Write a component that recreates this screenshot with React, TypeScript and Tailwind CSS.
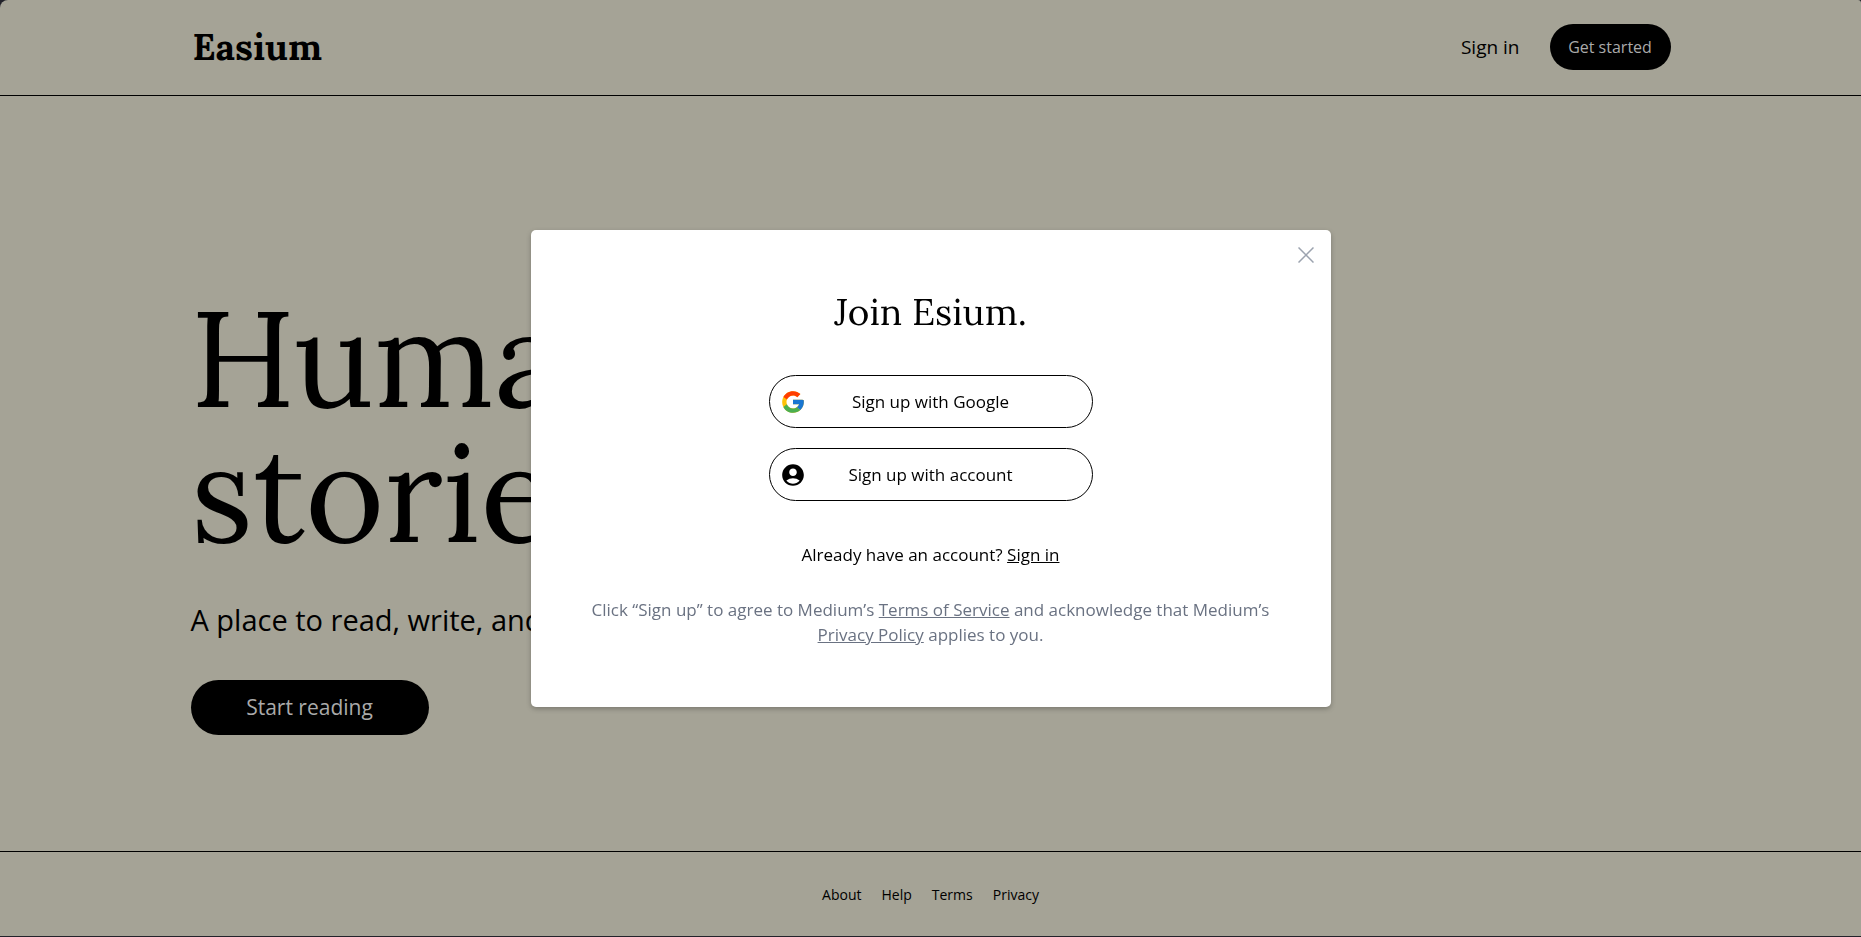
import React from "react";
import { FcGoogle } from "react-icons/fc";
import { MdAccountCircle } from "react-icons/md";

const serif = "font-['Lora','Liberation_Serif',serif]";

const footerLinks = ["About", "Help", "Terms", "Privacy"];

function Header() {
  return (
    <header className="border-b border-black">
      <div className="mx-auto flex h-[95px] max-w-[1480px] items-center justify-between pb-px">
        <a href="#" className={`${serif} pl-0.5 text-[37px] leading-[48px] font-bold`}>
          Easium
        </a>
        <nav className="flex items-center gap-[30px]">
          <a href="#signin" className="text-[19px]">
            Sign in
          </a>
          <button
            type="button"
            className="h-[46px] w-[121px] rounded-full bg-black text-[16px] text-[#aaaaaa]"
          >
            Get started
          </button>
        </nav>
      </div>
    </header>
  );
}

function Hero() {
  return (
    <main className="flex flex-1 items-center pt-[78px]">
      <div className="mx-auto w-full max-w-[1480px]">
        <h1 className={`${serif} text-[135px] leading-[135px]`}>
          Human
          <br />
          stories &amp; ideas
        </h1>
        <p className="mt-9 text-[29px] leading-[48px]">
          A place to read, write, and deepen your understanding
        </p>
        <button
          type="button"
          className="mt-9 h-[55px] w-[238px] rounded-full bg-black text-[21px] text-[#aaaaaa]"
        >
          Start reading
        </button>
      </div>
    </main>
  );
}

function Footer() {
  return (
    <footer className="border-t border-black">
      <nav className="flex h-[84px] items-center justify-center gap-5 text-[14px]">
        {footerLinks.map((label) => (
          <a key={label} href={`#${label.toLowerCase()}`}>
            {label}
          </a>
        ))}
      </nav>
    </footer>
  );
}

function SignUpButton({ icon, children }: { icon: React.ReactNode; children: React.ReactNode }) {
  return (
    <button
      type="button"
      className="grid h-[53px] w-[324px] grid-cols-[26px_1fr_26px] items-center rounded-full border border-black px-[10px] text-[17px]"
    >
      {icon}
      <span>{children}</span>
    </button>
  );
}

function JoinDialog() {
  return (
    <div className="fixed inset-0 flex items-center justify-center">
      <section
        role="dialog"
        aria-labelledby="join-title"
        className="relative flex w-[800px] flex-col items-center rounded-[5px] bg-white px-[60px] pt-[58px] pb-[60px] text-center shadow-[0_2px_5px_rgba(0,0,0,0.25)]"
      >
        <button type="button" aria-label="Close" className="absolute top-[17px] right-[17px] text-[#9ca3af]">
          <svg width="16" height="16" viewBox="0 0 16 16" fill="none" stroke="currentColor" strokeWidth="1.5">
            <path d="M.5.5l15 15M15.5.5l-15 15" />
          </svg>
        </button>
        <h2 id="join-title" className={`${serif} text-[37px] leading-[48px]`}>
          Join Esium.
        </h2>
        <div className="mt-[39px] flex flex-col gap-5">
          <SignUpButton icon={<FcGoogle size={26} />}>Sign up with Google</SignUpButton>
          <SignUpButton icon={<MdAccountCircle size={26} />}>Sign up with account</SignUpButton>
        </div>
        <p className="mt-[41px] text-[17px] leading-[25px]">
          Already have an account?{" "}
          <a href="#signin" className="underline">
            Sign in
          </a>
        </p>
        <p className="mt-[30px] text-[17px] leading-[25px] text-gray-500">
          Click “Sign up” to agree to Medium’s{" "}
          <a href="#terms" className="underline">
            Terms of Service
          </a>{" "}
          and acknowledge that Medium’s{" "}
          <a href="#privacy" className="underline">
            Privacy Policy
          </a>{" "}
          applies to you.
        </p>
      </section>
    </div>
  );
}

export default function App() {
  return (
    <div className="bg-[#22222a] pb-px font-['Segoe_UI','Open_Sans',sans-serif] text-black">
      <div className="flex min-h-[calc(100vh-1px)] flex-col rounded-tl-lg rounded-tr-[3px] bg-[#a5a396]">
        <Header />
        <Hero />
        <Footer />
      </div>
      <JoinDialog />
    </div>
  );
}
